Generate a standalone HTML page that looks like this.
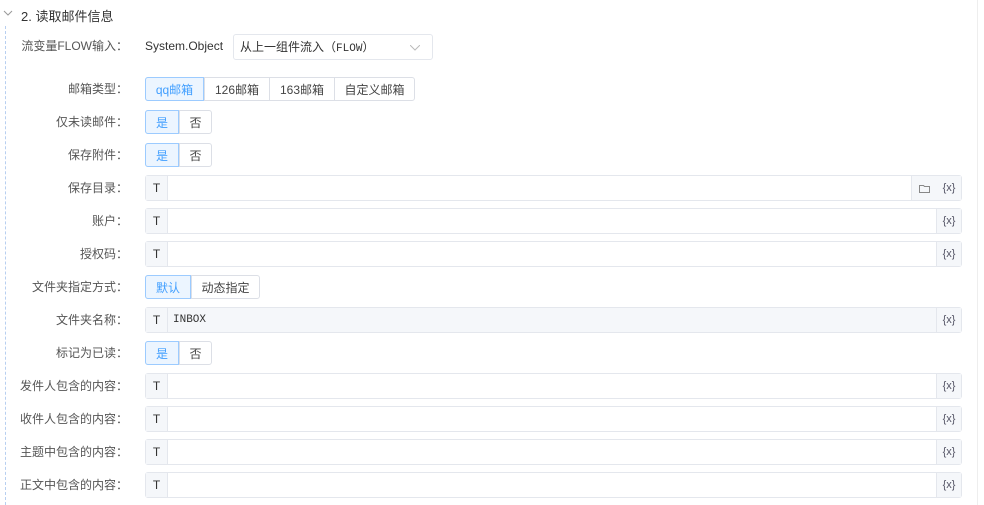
<!DOCTYPE html>
<html><head><meta charset="utf-8"><style>
body{margin:0;width:984px;height:505px;background:#fff;font-family:"Liberation Sans","Noto Sans CJK SC",sans-serif;font-size:12px;color:#333;position:relative;overflow:hidden}
.abs{position:absolute}
.lbl{position:absolute;right:856px;text-align:right;color:#555;white-space:nowrap;line-height:14px}
.grp{position:absolute;left:145px;display:flex;height:24px;border:1px solid #dcdfe6;border-radius:3px;box-sizing:border-box}
.grp span{display:flex;align-items:center;justify-content:center;border-left:1px solid #dcdfe6;color:#444;box-sizing:border-box}
.grp span:first-child{border-left:none}
.grp span.on{background:#ecf5ff;color:#409eff;border:1px solid #9ccbff;margin:-1px 0 -1px -1px;border-radius:3px 0 0 3px;height:24px}
.inp{position:absolute;left:145px;width:817px;height:26px;border:1px solid #e4e7ed;border-radius:3px;box-sizing:border-box;display:flex}
.inp .t{width:21px;border-right:1px solid #e4e7ed;background:#f5f7fa;display:flex;align-items:center;justify-content:center;color:#333;font-size:12px}
.inp .f{flex:1}
.inp .x{width:24px;border-left:1px solid #e4e7ed;background:#f5f7fa;display:flex;align-items:center;justify-content:center;font-size:11px;color:#556}
.inp .d{width:25px;border-left:1px solid #e4e7ed;background:#f5f7fa;display:flex;align-items:center;justify-content:center}
</style></head><body>
<div class="abs" style="left:5px;top:26px;height:479px;border-left:1px dashed #b8cff0"></div>
<div class="abs" style="left:977px;top:0;height:505px;border-left:1px solid #eee"></div>
<svg class="abs" style="left:3px;top:9px" width="10" height="8"><path d="M1 2 L5 6 L9 2" fill="none" stroke="#999" stroke-width="1"/></svg>
<div class="abs" style="left:21px;top:6px;font-size:13px;color:#333">2. 读取邮件信息</div>

<div class="lbl" style="top:39px">流变量FLOW输入：</div>
<div class="abs" style="left:145px;top:39px;color:#333">System.Object</div>
<div class="abs" style="left:233px;top:34px;width:200px;height:26px;border:1px solid #e4e7ed;border-radius:3px;box-sizing:border-box;padding-left:6px;line-height:24px;color:#333">从上一组件流入（<span style="font-family:'Liberation Mono',monospace;font-size:11px">FLOW</span>）
<svg style="position:absolute;right:12px;top:10px" width="10" height="6"><path d="M0 0 L5 5 L10 0" fill="none" stroke="#bbb"/></svg></div>

<div class="lbl" style="top:82px">邮箱类型：</div>
<div class="grp" style="top:77px;width:270px"><span class="on" style="width:59px">qq邮箱</span><span style="width:65px">126邮箱</span><span style="width:65px">163邮箱</span><span style="width:80px">自定义邮箱</span></div>

<div class="lbl" style="top:115px">仅未读邮件：</div>
<div class="grp" style="top:110px;width:67px"><span class="on" style="width:34px">是</span><span style="width:32px">否</span></div>
<div class="lbl" style="top:148px">保存附件：</div>
<div class="grp" style="top:143px;width:67px"><span class="on" style="width:34px">是</span><span style="width:32px">否</span></div>

<div class="lbl" style="top:181px">保存目录：</div>
<div class="inp" style="top:175px"><div class="t">T</div><div class="f"></div><div class="d"><svg width="11" height="9"><path d="M0.5 1.5h4l1 1h5v6h-10z" fill="none" stroke="#888"/></svg></div><div class="x" style="border-left:none">{x}</div></div>
<div class="lbl" style="top:214px">账户：</div>
<div class="inp" style="top:208px"><div class="t">T</div><div class="f"></div><div class="x">{x}</div></div>
<div class="lbl" style="top:247px">授权码：</div>
<div class="inp" style="top:241px"><div class="t">T</div><div class="f"></div><div class="x">{x}</div></div>

<div class="lbl" style="top:280px">文件夹指定方式：</div>
<div class="grp" style="top:275px;width:115px"><span class="on" style="width:46px">默认</span><span style="width:68px">动态指定</span></div>

<div class="lbl" style="top:313px">文件夹名称：</div>
<div class="inp" style="top:307px;background:#f5f7fa"><div class="t">T</div><div class="f" style="padding-left:5px;line-height:24px;font-family:'Liberation Mono',monospace;font-size:11px">INBOX</div><div class="x">{x}</div></div>

<div class="lbl" style="top:346px">标记为已读：</div>
<div class="grp" style="top:341px;width:67px"><span class="on" style="width:34px">是</span><span style="width:32px">否</span></div>

<div class="lbl" style="top:379px">发件人包含的内容：</div>
<div class="inp" style="top:373px"><div class="t">T</div><div class="f"></div><div class="x">{x}</div></div>
<div class="lbl" style="top:412px">收件人包含的内容：</div>
<div class="inp" style="top:406px"><div class="t">T</div><div class="f"></div><div class="x">{x}</div></div>
<div class="lbl" style="top:445px">主题中包含的内容：</div>
<div class="inp" style="top:439px"><div class="t">T</div><div class="f"></div><div class="x">{x}</div></div>
<div class="lbl" style="top:478px">正文中包含的内容：</div>
<div class="inp" style="top:472px"><div class="t">T</div><div class="f"></div><div class="x">{x}</div></div>
</body></html>
